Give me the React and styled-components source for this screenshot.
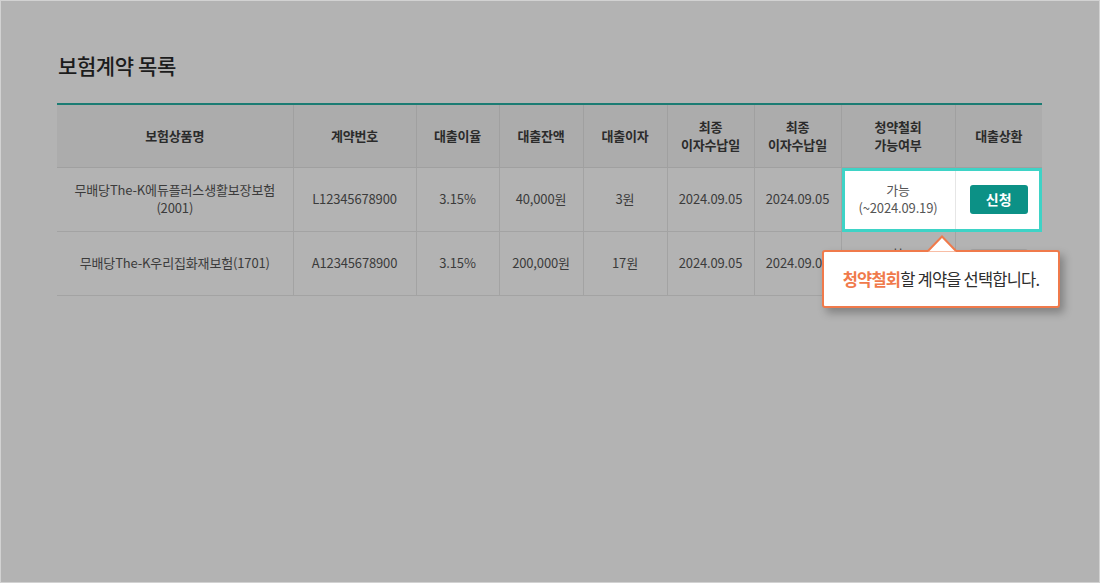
import React from "react";
import styled, { createGlobalStyle } from "styled-components";

const GlobalStyle = createGlobalStyle`
  html, body {
    margin: 0;
    padding: 0;
  }
  body {
    font-family: "Noto Sans CJK KR", "Noto Sans", sans-serif;
  }
  * {
    box-sizing: border-box;
  }
`;

const columns = [236, 123, 83, 84, 84, 87, 87, 114, 87];

const headers = [
  ["보험상품명"],
  ["계약번호"],
  ["대출이율"],
  ["대출잔액"],
  ["대출이자"],
  ["최종", "이자수납일"],
  ["최종", "이자수납일"],
  ["청약철회", "가능여부"],
  ["대출상환"],
];

const rows = [
  {
    name: ["무배당The-K에듀플러스생활보장보험", "(2001)"],
    no: "L12345678900",
    rate: "3.15%",
    balance: "40,000원",
    interest: "3원",
    date1: "2024.09.05",
    date2: "2024.09.05",
    active: true,
  },
  {
    name: ["무배당The-K우리집화재보험(1701)"],
    no: "A12345678900",
    rate: "3.15%",
    balance: "200,000원",
    interest: "17원",
    date1: "2024.09.05",
    date2: "2024.09.05",
    active: false,
  },
];

function Lines({ lines }) {
  return lines.map((line, i) => (
    <React.Fragment key={i}>
      {i > 0 && <br />}
      {line}
    </React.Fragment>
  ));
}

export default function App() {
  return (
    <Page>
      <GlobalStyle />
      <Title>보험계약 목록</Title>
      <TableWrap>
        <Table>
          <colgroup>
            {columns.map((w, i) => (
              <col key={i} style={{ width: w }} />
            ))}
          </colgroup>
          <thead>
            <tr>
              {headers.map((h, i) => (
                <Th key={i}>
                  <Lines lines={h} />
                </Th>
              ))}
            </tr>
          </thead>
          <tbody>
            {rows.map((row) => (
              <tr key={row.no}>
                <Td>
                  <Lines lines={row.name} />
                </Td>
                <Td>{row.no}</Td>
                <Td>{row.rate}</Td>
                <Td>{row.balance}</Td>
                <Td>{row.interest}</Td>
                <Td>{row.date1}</Td>
                <Td>{row.date2}</Td>
                <Td $lit={row.active}>
                  가능
                  <br />
                  (~2024.09.19)
                </Td>
                <Td $lit={row.active} $last>
                  <ApplyButton $lit={row.active}>신청</ApplyButton>
                </Td>
              </tr>
            ))}
          </tbody>
        </Table>

        <Spotlight />

        <Tooltip>
          <Arrow width="30" height="17" viewBox="0 0 30 17">
            <polygon points="1,16.5 15,1.5 29,16.5" fill="#ffffff" />
            <polyline
              points="1,16 15,1.5 29,16"
              fill="none"
              stroke="#f07a4b"
              strokeWidth="2"
              strokeLinejoin="miter"
            />
          </Arrow>
          <Highlight>청약철회</Highlight>할 계약을 선택합니다.
        </Tooltip>
      </TableWrap>
    </Page>
  );
}

const Page = styled.div`
  width: 1100px;
  height: 583px;
  background: #b3b3b3;
  border: 1px solid #d2d2d2;
  padding: 49px 57px 0 56px;
  overflow: hidden;
`;

const Title = styled.h2`
  margin: 0 0 23px 1px;
  font-size: 21px;
  font-weight: 500;
  line-height: 30px;
  color: #1c1c1c;
  letter-spacing: -0.4px;
`;

const TableWrap = styled.div`
  position: relative;
  width: 985px;
`;

const Table = styled.table`
  width: 985px;
  table-layout: fixed;
  border-collapse: collapse;
  border-top: 2px solid #1b7c73;
`;

const Th = styled.th`
  height: 63px;
  padding: 0 4px;
  background: #acacac;
  border-left: 1px solid #a0a0a0;
  border-bottom: 1px solid #a0a0a0;
  font-size: 13px;
  font-weight: 700;
  line-height: 18px;
  color: #2b2b2b;
  text-align: center;
  vertical-align: middle;
  letter-spacing: -0.2px;

  &:first-child {
    border-left: none;
  }
`;

const Td = styled.td`
  height: 64px;
  padding: 0 4px;
  background: ${(p) => (p.$lit ? "#ffffff" : "transparent")};
  border-left: 1px solid ${(p) => (p.$lit && p.$last ? "#e6e6e6" : "#a3a3a3")};
  border-bottom: 1px solid #a3a3a3;
  font-size: 13px;
  line-height: 18px;
  color: ${(p) => (p.$lit ? "#555555" : "#3b3b3b")};
  text-align: center;
  vertical-align: middle;
  letter-spacing: -0.15px;

  &:first-child {
    border-left: none;
  }
`;

const ApplyButton = styled.button`
  width: 58px;
  height: 29px;
  border: none;
  border-radius: 3px;
  background: ${(p) => (p.$lit ? "#0c9186" : "#a3a3a3")};
  color: #ffffff;
  font-family: inherit;
  font-size: 14px;
  font-weight: 700;
  cursor: pointer;
`;

const Spotlight = styled.div`
  position: absolute;
  left: 785px;
  top: 65px;
  width: 200px;
  height: 64px;
  border: 3px solid #3ed3c6;
  pointer-events: none;
`;

const Tooltip = styled.div`
  position: absolute;
  left: 765px;
  top: 147px;
  width: 238px;
  height: 58px;
  display: flex;
  align-items: center;
  justify-content: center;
  background: #ffffff;
  border: 2px solid #f07a4b;
  border-radius: 3px;
  box-shadow: 4px 5px 8px rgba(0, 0, 0, 0.28);
  font-size: 16.5px;
  color: #2e2e2e;
  letter-spacing: -0.8px;
  white-space: nowrap;
`;

const Arrow = styled.svg`
  position: absolute;
  left: 103px;
  top: -17px;
`;

const Highlight = styled.span`
  color: #f07a4b;
  font-weight: 700;
`;
